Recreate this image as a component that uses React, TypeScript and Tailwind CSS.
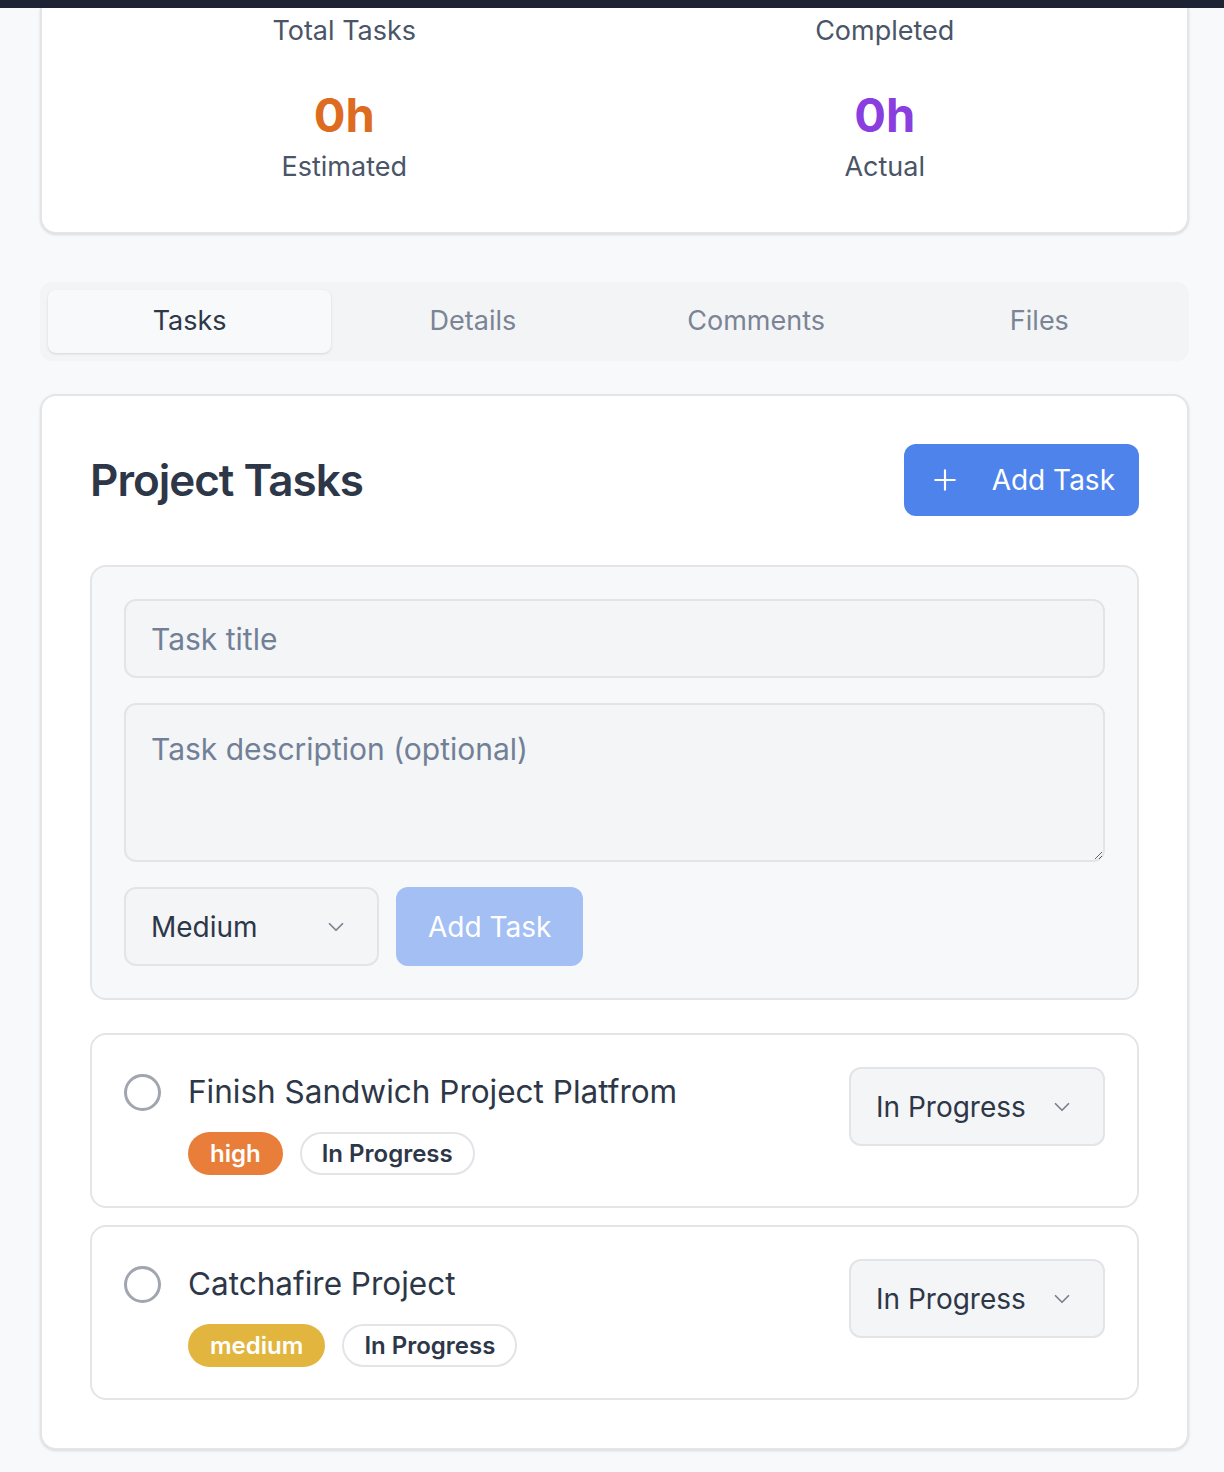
import React, { useState } from 'react';

interface Task {
  id: number;
  title: string;
  priority: 'high' | 'medium' | 'low';
  status: string;
}

const tasks: Task[] = [
  { id: 1, title: 'Finish Sandwich Project Platfrom', priority: 'high', status: 'In Progress' },
  { id: 2, title: 'Catchafire Project', priority: 'medium', status: 'In Progress' },
];

const priorityClass: Record<Task['priority'], string> = {
  high: 'bg-[#e97d3a]',
  medium: 'bg-[#e2b53e]',
  low: 'bg-[#48bb78]',
};

const Chevron = () => (
  <svg className="h-[26px] w-[26px] text-[#7b8190]" fill="none" viewBox="0 0 24 24" stroke="currentColor">
    <path strokeLinecap="round" strokeLinejoin="round" strokeWidth={1.6} d="M6 9l6 6 6-6" />
  </svg>
);

const SelectBox = ({ value, className }: { value: string; className: string }) => (
  <div
    className={`flex h-[79px] items-center justify-between rounded-[12px] border-2 border-[#e2e4e8] bg-[#f4f5f7] pl-[25px] pr-[28px] text-[28px] text-[#2d3748] ${className}`}
  >
    <span>{value}</span>
    <Chevron />
  </div>
);

const App: React.FC = () => {
  const [activeTab, setActiveTab] = useState('Tasks');
  const tabs = ['Tasks', 'Details', 'Comments', 'Files'];

  return (
    <div className="min-h-screen bg-[#f8f9fb] font-['Inter',sans-serif]">
      <div className="h-2 bg-[#1e2433]" />

      <div className="pb-5 pl-10 pr-[35px]">
        {/* Stats */}
        <div className="rounded-b-[16px] border-x-2 border-b-2 border-[#e3e5e9] bg-white px-12 pb-[45px] pt-[3px] shadow-sm">
          <div className="grid grid-cols-2 gap-x-8 gap-y-9 text-center">
            <div className="text-[27px] leading-[40px] text-[#4a5568]">Total Tasks</div>
            <div className="text-[27px] leading-[40px] text-[#4a5568]">Completed</div>
            <div>
              <div className="text-[47px] font-bold leading-[56px] text-[#dd6b20]">0h</div>
              <div className="mt-[4px] text-[27px] leading-[40px] text-[#4a5568]">Estimated</div>
            </div>
            <div>
              <div className="text-[47px] font-bold leading-[56px] text-[#8a3ee0]">0h</div>
              <div className="mt-[4px] text-[27px] leading-[40px] text-[#4a5568]">Actual</div>
            </div>
          </div>
        </div>

        {/* Tabs */}
        <div className="mt-12 grid grid-cols-4 rounded-[12px] bg-[#f3f4f6] p-2">
          {tabs.map((tab) => (
            <button
              key={tab}
              onClick={() => setActiveTab(tab)}
              className={`h-[63px] rounded-[8px] text-[27px] ${
                activeTab === tab ? 'bg-[#f8f9fa] text-[#2d3748] shadow-sm' : 'text-[#7b8494]'
              }`}
            >
              {tab}
            </button>
          ))}
        </div>

        {/* Project Tasks */}
        <div className="mt-[33px] rounded-[16px] border-2 border-[#e3e5e9] bg-white px-12 pb-12 pt-12 shadow-sm">
          <div className="flex items-center justify-between">
            <h2 className="text-[44px] font-semibold tracking-[-1px] text-[#2d3748]">Project Tasks</h2>
            <button className="flex h-[72px] items-center gap-[34px] rounded-[12px] bg-[#4f83ec] pl-[28px] pr-[24px] text-[28px] text-white">
              <svg className="h-[26px] w-[26px]" fill="none" viewBox="0 0 24 24" stroke="currentColor">
                <path strokeLinecap="round" strokeWidth={2} d="M12 3v18M3 12h18" />
              </svg>
              Add Task
            </button>
          </div>

          {/* New task form */}
          <div className="mt-[49px] rounded-[16px] border-2 border-[#e3e5e9] bg-[#f7f8fa] p-[32px]">
            <input
              placeholder="Task title"
              className="h-[79px] w-full rounded-[12px] border-2 border-[#e2e4e8] bg-[#f4f5f7] px-[25px] text-[30px] text-[#2d3748] placeholder:text-[#718096] focus:outline-none"
            />
            <textarea
              placeholder="Task description (optional)"
              className="mt-[25px] block h-[159px] w-full rounded-[12px] border-2 border-[#e2e4e8] bg-[#f4f5f7] px-[25px] py-[22px] text-[30px] text-[#2d3748] placeholder:text-[#718096] focus:outline-none"
            />
            <div className="mt-[25px] flex gap-[17px]">
              <SelectBox value="Medium" className="w-[255px]" />
              <button className="h-[79px] rounded-[12px] bg-[#a3bff3] px-[32px] text-[28px] text-white">Add Task</button>
            </div>
          </div>

          {/* Task list */}
          <div className="mt-[33px] flex flex-col gap-[17px]">
            {tasks.map((task) => (
              <div
                key={task.id}
                className="flex items-start justify-between rounded-[16px] border-2 border-[#e3e5e9] bg-white pb-[31px] pl-[32px] pr-[32px] pt-[32px]"
              >
                <div className="flex items-start gap-[27px]">
                  <div className="mt-[7px] h-[37px] w-[37px] rounded-full border-[3px] border-[#a0a5b0]" />
                  <div>
                    <div className="text-[31.5px] leading-[50px] text-[#2d3748]">{task.title}</div>
                    <div className="mt-[15px] flex gap-[17px]">
                      <span
                        className={`flex h-[43px] items-center rounded-full px-[22px] text-[24px] font-semibold text-white ${priorityClass[task.priority]}`}
                      >
                        {task.priority}
                      </span>
                      <span className="flex h-[43px] items-center rounded-full border-2 border-[#e2e4e8] px-[20px] text-[24px] font-semibold text-[#2d3748]">
                        {task.status}
                      </span>
                    </div>
                  </div>
                </div>
                <SelectBox value={task.status} className="w-[256px]" />
              </div>
            ))}
          </div>
        </div>
      </div>
    </div>
  );
};

export default App;
